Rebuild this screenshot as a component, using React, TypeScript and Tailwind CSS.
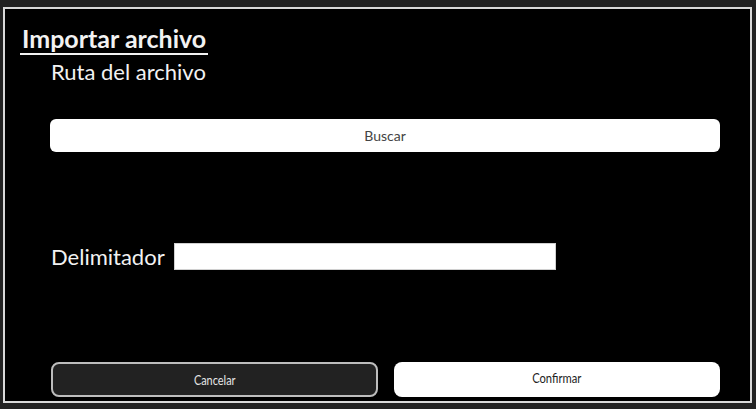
export default function App() {
  return (
    <div className="h-[409px] w-[756px] bg-[#222222] pl-[3px] pt-[7px] font-['Lato','Noto_Sans',sans-serif]">
      <div className="flex h-[396px] w-[749px] flex-col border-2 border-[#d9d9d9] bg-black">
        <div className="ml-[15px] mt-[14px] w-fit border-b-2 border-[#f2f2f2] px-[2px]">
          <h1 className="text-[25px] font-bold leading-[30px] text-[#f2f2f2]">Importar archivo</h1>
        </div>
        <p className="ml-[46px] mt-[4px] text-[22px] leading-[26px] text-[#f2f2f2]">Ruta del archivo</p>

        <button className="ml-[45px] mt-[34px] h-[33px] w-[670px] rounded-[6px] bg-white text-[14px] text-[#444444]">
          Buscar
        </button>

        <div className="ml-[46px] mt-[91px] flex items-center gap-[9px]">
          <span className="text-[22px] leading-[26px] text-[#f2f2f2]">Delimitador</span>
          <input className="h-[27px] w-[382px] border border-[#d0d0d0] bg-white" />
        </div>

        <div className="ml-[46px] mt-auto mb-[4px] flex gap-[16px]">
          <button className="h-[35px] w-[327px] rounded-[8px] border-2 border-[#bdbdbd] bg-[#222222] text-[14px] text-[#e5e5e5]">
            <span className="inline-block scale-x-[0.78]">Cancelar</span>
          </button>
          <button className="h-[35px] w-[326px] rounded-[8px] bg-white pb-[4px] text-[14px] text-[#222222]">
            <span className="inline-block scale-x-[0.8]">Confirmar</span>
          </button>
        </div>
      </div>
    </div>
  );
}
